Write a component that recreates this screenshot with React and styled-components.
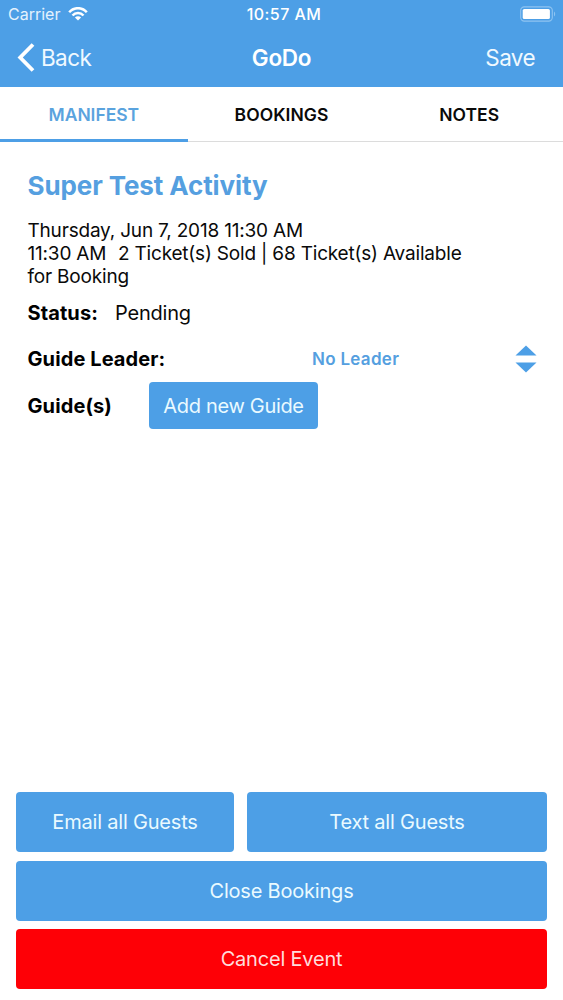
//===
// Imports
//===

import React from 'react';
import styled, {createGlobalStyle} from 'styled-components';

const GlobalStyle = createGlobalStyle`
    *{
        box-sizing: border-box;
    }
    body{
        margin: 0;
        background-color: white;
        color: #0a0a0a;
        font-family: Inter, "Liberation Sans", sans-serif;
    }
    button{
        font-family: inherit;
        border: none;
        padding: 0;
        background: none;
        white-space: nowrap;
    }
`

const blue = '#4d9fe6';

const Screen = styled.div`
    display: flex;
    flex-direction: column;
    width: 563px;
    height: 1000px;
    overflow: hidden;
`

//===
// Header
//===

const StyledHeader = styled.header`
    height: 87px;
    background-color: ${blue};
    color: white;
`

const StatusBar = styled.div`
    display: grid;
    grid-template-columns: 1fr auto 1fr;
    align-items: center;
    height: 28px;
    padding: 0 7px 0 8px;
    font-size: 16px;
    .carrier{
        display: flex;
        align-items: center;
        gap: 8px;
        color: #e4f2fd;
    }
    .time{
        margin-left: 4px;
        font-weight: 500;
        font-size: 16px;
        letter-spacing: 0.45px;
    }
    .battery{
        justify-self: end;
    }
    svg{
        display: block;
    }
`

const NavBar = styled.div`
    display: grid;
    grid-template-columns: 1fr auto 1fr;
    align-items: center;
    height: 59px;
    padding: 0 17px;
    h1{
        margin: 0;
        font-size: 22.5px;
        font-weight: 600;
        letter-spacing: -0.3px;
    }
`

const NavButton = styled.button`
    display: flex;
    align-items: center;
    gap: 6px;
    justify-self: ${({$end}) => ($end ? 'end' : 'start')};
    margin-right: ${({$end}) => ($end ? '11px' : '0')};
    color: #f0f9ff;
    font-size: 22.5px;
    letter-spacing: -0.6px;
`

//===
// Tabs
//===

const TabBar = styled.nav`
    display: grid;
    grid-template-columns: repeat(3, 1fr);
    height: 55px;
    border-bottom: 1px solid #dcdcdc;
`

const Tab = styled.button`
    height: 55px;
    padding-top: 2px;
    border-bottom: 3px solid ${({$active}) => ($active ? blue : 'transparent')};
    color: ${({$active}) => ($active ? '#5aa3de' : '#0a0a0a')};
    font-size: 17.5px;
    font-weight: 600;
    letter-spacing: ${({$active}) => ($active ? '-0.05px' : '0.05px')};
`

//===
// Details
//===

const Details = styled.main`
    flex: 1;
    padding: 28px 26px 0 27.5px;
`

const Title = styled.h2`
    margin: 0 0 17px;
    color: #559fe0;
    font-size: 26px;
    line-height: 32px;
    font-weight: 700;
    letter-spacing: -0.1px;
`

const Summary = styled.p`
    margin: 0;
    font-size: 19px;
    line-height: 23px;
    letter-spacing: -0.19px;
    .gap{
        white-space: pre;
        letter-spacing: 0.5px;
    }
`

const Row = styled.div`
    display: flex;
    align-items: center;
    height: ${({$height}) => $height}px;
    font-size: 20px;
    letter-spacing: -0.2px;
`

const Label = styled.span`
    width: ${({$width}) => $width}px;
    font-weight: 700;
    color: black;
    letter-spacing: 0.1px;
`

const Picker = styled.div`
    display: flex;
    flex: 1;
    align-items: center;
    justify-content: space-between;
    color: #559fe0;
    font-size: 17px;
    font-weight: 600;
    letter-spacing: 0.3px;
`

const Button = styled.button`
    flex: ${({$grow}) => $grow || '0 0 auto'};
    width: ${({$width}) => ($width ? $width + 'px' : 'auto')};
    height: ${({$height}) => $height || 60}px;
    border-radius: 4px;
    background-color: ${({$danger}) => ($danger ? '#fe0006' : blue)};
    color: ${({$danger}) => ($danger ? '#ffdcdc' : '#eafaff')};
    font-size: 20px;
    letter-spacing: ${({$tight}) => ($tight ? '-0.32px' : '-0.2px')};
`

const Actions = styled.footer`
    display: flex;
    flex-direction: column;
    padding: 0 16px 11px;
    .guests{
        display: flex;
        gap: 13px;
        margin-bottom: 9px;
    }
    .guests + button{
        margin-bottom: 8px;
    }
`

//===
// Icons
//===

const WifiIcon = () => (
    <svg width="20" height="14" viewBox="0 0 20 14" fill="none" stroke="white" strokeWidth="2.5">
        <path d="M1.2 5.3C6 -0.2 14 -0.2 18.8 5.3" />
        <path d="M4.5 8.5C7.5 5.2 12.5 5.2 15.5 8.5" />
        <path d="M10 13.5L6.9 10.4C8.6 8.8 11.4 8.8 13.1 10.4Z" fill="white" stroke="none" />
    </svg>
)

const BatteryIcon = () => (
    <svg className="battery" width="36" height="16" viewBox="0 0 36 16">
        <rect x="0.7" y="0.9" width="31.6" height="14.2" rx="3.6" fill="none" stroke="#8fc4f1" strokeWidth="1.1" />
        <rect x="2.7" y="2.9" width="27.2" height="10.2" rx="1.6" fill="white" />
        <path d="M34 5.5C35.6 6.4 35.6 9.6 34 10.5Z" fill="#8fc4f1" />
    </svg>
)

const BackIcon = () => (
    <svg width="18" height="29" viewBox="0 0 18 29" fill="none" stroke="white" strokeWidth="3.8">
        <path d="M16 1.5L3.2 14.5L16 27.5" />
    </svg>
)

const SortIcon = () => (
    <svg width="22" height="28" viewBox="0 0 22 28" fill={blue}>
        <path d="M0.5 10.5L11 0.5L21.5 10.5Z" />
        <path d="M0.5 17.5H21.5L11 27.5Z" />
    </svg>
)

//===
// Component
//===

const tabs = ['MANIFEST', 'BOOKINGS', 'NOTES'];

const App = () => {
    return(
        <>
        <GlobalStyle />
        <Screen>
            <StyledHeader>
                <StatusBar>
                    <div className="carrier">Carrier <WifiIcon /></div>
                    <div className="time">10:57 AM</div>
                    <BatteryIcon />
                </StatusBar>
                <NavBar>
                    <NavButton><BackIcon />Back</NavButton>
                    <h1>GoDo</h1>
                    <NavButton $end>Save</NavButton>
                </NavBar>
            </StyledHeader>
            <TabBar>
                {tabs.map((tab, i) => (
                    <Tab key={tab} $active={i === 0}>{tab}</Tab>
                ))}
            </TabBar>
            <Details>
                <Title>Super Test Activity</Title>
                <Summary>
                    Thursday, Jun 7, 2018 11:30 AM<br />
                    11:30 AM<span className="gap">{'  '}</span>2 Ticket(s) Sold | 68 Ticket(s) Available<br />
                    for Booking
                </Summary>
                <Row $height={49}>
                    <Label $width={87.5}>Status:</Label>
                    Pending
                </Row>
                <Row $height={43}>
                    <Label $width={284.5}>Guide Leader:</Label>
                    <Picker>No Leader <SortIcon /></Picker>
                </Row>
                <Row $height={51}>
                    <Label $width={121.5}>Guide(s)</Label>
                    <Button $width={169} $height={47} $tight>Add new Guide</Button>
                </Row>
            </Details>
            <Actions>
                <div className="guests">
                    <Button $width={218}>Email all Guests</Button>
                    <Button $grow={1}>Text all Guests</Button>
                </div>
                <Button>Close Bookings</Button>
                <Button $danger>Cancel Event</Button>
            </Actions>
        </Screen>
        </>)
};

export default App;
